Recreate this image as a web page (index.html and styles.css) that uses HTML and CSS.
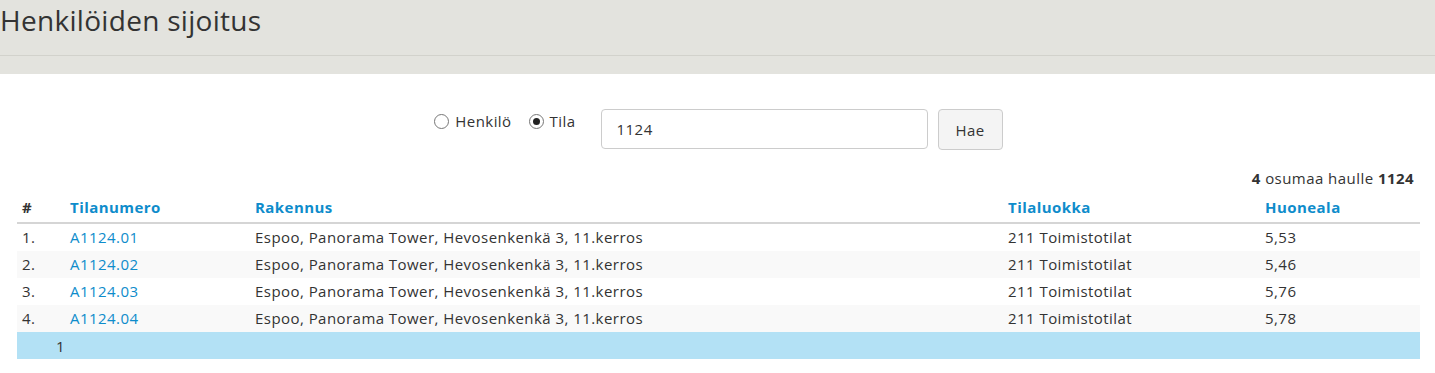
FILE: index.html
```html
<!DOCTYPE html>
<html lang="fi">
<head>
    <meta charset="UTF-8">
    <title>Henkilöiden sijoitus</title>
    <link rel="stylesheet" href="styles.css">
</head>
<body>
    <div class="page-header">
        <h1>Henkilöiden sijoitus</h1>
    </div>

    <div class="content">
        <form class="search">
            <label class="radio"><input type="radio" name="type"> Henkilö</label>
            <label class="radio"><input type="radio" name="type" checked> Tila</label>
            <input type="text" class="search-input" value="1124">
            <button type="button" class="search-button">Hae</button>
        </form>

        <div class="result-count"><b>4</b> osumaa haulle <b>1124</b></div>

        <table class="results">
            <thead>
                <tr>
                    <th class="col-num">#</th>
                    <th class="col-id"><a href="#">Tilanumero</a></th>
                    <th class="col-building"><a href="#">Rakennus</a></th>
                    <th class="col-class"><a href="#">Tilaluokka</a></th>
                    <th class="col-area"><a href="#">Huoneala</a></th>
                </tr>
            </thead>
            <tbody>
                <tr>
                    <td>1.</td>
                    <td><a href="#">A1124.01</a></td>
                    <td>Espoo, Panorama Tower, Hevosenkenkä 3, 11.kerros</td>
                    <td>211 Toimistotilat</td>
                    <td>5,53</td>
                </tr>
                <tr>
                    <td>2.</td>
                    <td><a href="#">A1124.02</a></td>
                    <td>Espoo, Panorama Tower, Hevosenkenkä 3, 11.kerros</td>
                    <td>211 Toimistotilat</td>
                    <td>5,46</td>
                </tr>
                <tr>
                    <td>3.</td>
                    <td><a href="#">A1124.03</a></td>
                    <td>Espoo, Panorama Tower, Hevosenkenkä 3, 11.kerros</td>
                    <td>211 Toimistotilat</td>
                    <td>5,76</td>
                </tr>
                <tr>
                    <td>4.</td>
                    <td><a href="#">A1124.04</a></td>
                    <td>Espoo, Panorama Tower, Hevosenkenkä 3, 11.kerros</td>
                    <td>211 Toimistotilat</td>
                    <td>5,78</td>
                </tr>
            </tbody>
            <tfoot>
                <tr class="pager">
                    <td colspan="5"><span class="page">1</span></td>
                </tr>
            </tfoot>
        </table>
    </div>
</body>
</html>
```

FILE: styles.css
```css
/* Yleiset */
body {
    margin: 0;
    font-family: "Open Sans", "Noto Sans", sans-serif;
    font-size: 15px;
    letter-spacing: 0.45px;
    color: #333;
    background-color: white;
}

a {
    color: #0e8ccb;
    text-decoration: none;
}

.page-header {
    background-color: #e3e3de;
    padding-bottom: 18px;
}

.page-header h1 {
    margin: 0;
    height: 55px;
    line-height: 40px;
    font-size: 28px;
    letter-spacing: 0.3px;
    font-weight: normal;
    color: #333;
    border-bottom: 1px solid #d2d2cc;
}

.content {
    padding: 0 15px 0 17px;
}

/* Haku */
.search {
    display: flex;
    justify-content: center;
    align-items: flex-start;
    margin: 35px 0 0 0;
}

.radio {
    display: flex;
    align-items: center;
    gap: 6px;
    margin-right: 17px;
    height: 24px;
}

.radio input {
    appearance: none;
    margin: 0;
    width: 15px;
    height: 15px;
    border: 1px solid #777;
    border-radius: 50%;
    background-color: white;
    display: grid;
    place-items: center;
}

.radio input:checked::after {
    content: "";
    width: 7px;
    height: 7px;
    border-radius: 50%;
    background-color: #222;
}

.search-input {
    width: 327px;
    height: 40px;
    box-sizing: border-box;
    border: 1px solid #ccc;
    border-radius: 4px;
    padding: 0 15px;
    margin-left: 8px;
    font-family: inherit;
    font-size: 15px;
    letter-spacing: 0.45px;
    color: #333;
}

.search-button {
    height: 41px;
    padding: 0 17px;
    margin-left: 10px;
    border: 1px solid #ccc;
    border-radius: 4px;
    background-color: #f4f4f4;
    font-family: inherit;
    font-size: 15px;
    letter-spacing: 0.45px;
    color: #333;
}

.result-count {
    text-align: right;
    padding: 18px 6px 0 0;
    height: 20px;
    line-height: 20px;
}

/* Taulukko */
.results {
    width: 100%;
    border-collapse: collapse;
    margin-top: 5px;
}

.results th {
    text-align: left;
    font-weight: bold;
    padding: 4px 5px 5px 5px;
    border-bottom: 2px solid #d5d5d5;
    line-height: 20px;
}

.results td {
    padding: 3px 5px 4px 5px;
    line-height: 20px;
}

.col-num { width: 38px; }
.col-id { width: 175px; }
.col-building { width: 743px; }
.col-class { width: 247px; }

.results tbody tr:nth-child(even) {
    background-color: #f9f9f9;
}

.pager td {
    background-color: #b3e1f5;
    padding: 4px 5px 3px 5px;
}

.page {
    display: inline-block;
    padding-left: 34px;
}
```
